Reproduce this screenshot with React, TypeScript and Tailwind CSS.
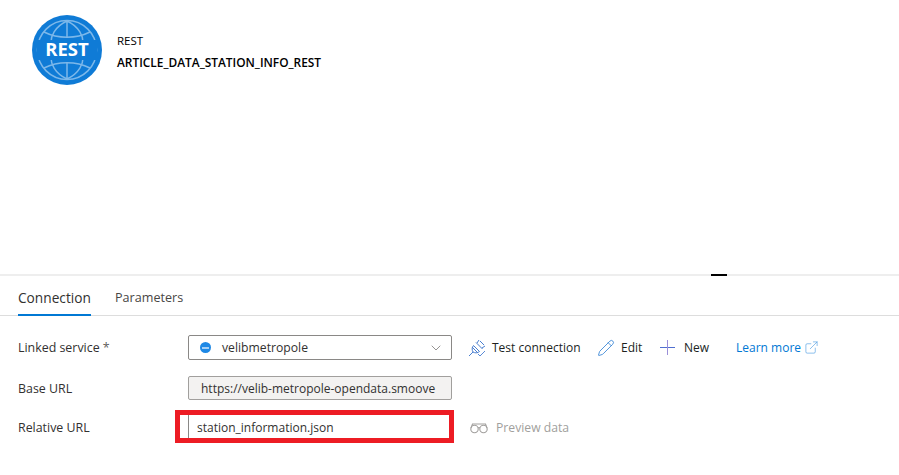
import { ChevronDown, Pencil, ExternalLink } from 'lucide-react'

function RestLogo() {
  return (
    <svg width="70" height="70" viewBox="0 0 70 70">
      <circle cx="35" cy="35" r="35" fill="#0f7bd6" />
      <circle cx="35" cy="35" r="29.5" fill="none" stroke="#7db8ea" strokeWidth="1.5" />
      <path d="M35 6 C22 12 19 22 19 27 M35 6 C48 12 51 22 51 27 M35 64 C22 58 19 48 19 43 M35 64 C48 58 51 48 51 43 M35 6 V22 M35 48 V64" fill="none" stroke="#7db8ea" strokeWidth="1.5" />
      <path d="M12 17 C26 24 44 24 58 17 M12 53 C26 46 44 46 58 53" fill="none" stroke="#7db8ea" strokeWidth="1.5" />
      <rect x="5" y="25" width="60" height="20" fill="#0f7bd6" />
      <text x="35" y="41" textAnchor="middle" fill="#fff" fontSize="18.5" fontWeight="700" fontFamily="'Open Sans', sans-serif">REST</text>
    </svg>
  )
}

function PlugIcon() {
  return (
    <svg width="18" height="18" viewBox="0 0 18 18" fill="none" stroke="#4a7fd0" strokeWidth="1" className="shrink-0">
      <path d="M1 17 L5 13 M4 8 L10 14 M5.5 6.5 C3.5 9 4 11 5 13 C7 14 9 14.5 11.5 12.5 Z" />
      <path d="M8 3.5 L14.5 10 M11 1 L9 4 M17 7 L14 9 M12 2 L16 6" />
      <path d="M10 15 L12 17 L17 12" stroke="#5b8bd6" />
    </svg>
  )
}

function PlusIcon() {
  return (
    <svg width="15" height="15" viewBox="0 0 15 15" className="shrink-0">
      <rect x="0" y="7" width="15" height="1" fill="#4f6fd0" />
      <rect x="7" y="0" width="1" height="15" fill="#9a8fd8" />
    </svg>
  )
}

function GlassesIcon() {
  return (
    <svg width="18" height="12" viewBox="0 0 18 12" fill="none" stroke="#a19f9d" strokeWidth="1.1" className="shrink-0">
      <circle cx="4.5" cy="7" r="3.7" />
      <circle cx="13.5" cy="7" r="3.7" />
      <path d="M1 6 L2.5 2 H15.5 L17 6 M8 6 Q9 5 10 6" />
    </svg>
  )
}

function Label({ children }: { children: React.ReactNode }) {
  return <div className="w-[170px] shrink-0 pt-[2px] text-[12.4px] text-[#323130]">{children}</div>
}

export default function App() {
  return (
    <div className="relative h-[475px] w-[899px] overflow-hidden bg-white font-['Open_Sans',sans-serif] text-[12px] text-[#323130]">
      <div className="flex h-[274px] items-start pl-[32px] pt-[15px]">
        <RestLogo />
        <div className="ml-[15px] mt-[17px] flex flex-col text-black">
          <span className="text-[11.5px] leading-[18px]">REST</span>
          <span className="mt-[3px] text-[11.9px] font-semibold leading-[18px]">ARTICLE_DATA_STATION_INFO_REST</span>
        </div>
      </div>

      <div className="relative h-[2px] bg-[#eeeeee]">
        <div className="absolute left-[711px] top-0 h-[2px] w-[16px] bg-black" />
      </div>

      <div className="flex h-[40px] items-stretch border-b border-[#dddddd] pl-[18px]">
        <div className="relative flex w-[73px] items-center whitespace-nowrap pt-[5px] text-[13.7px] text-[#323130]">
          Connection
          <div className="absolute bottom-[-1px] left-0 right-0 h-[2px] bg-[#0078d4]" />
        </div>
        <div className="ml-[24px] flex items-center pt-[5px] text-[12.6px] text-[#484644]">Parameters</div>
      </div>

      <div className="flex flex-col pl-[18px] pt-[19px]">
        <div className="flex h-[25px] items-center">
          <Label>Linked service <span className="text-[#605e5c]">*</span></Label>
          <div className="flex h-[25px] w-[264px] items-center rounded-[2px] border border-[#8a8886] pl-[11px] pr-[7px]">
            <span className="flex h-[11px] w-[11px] items-center justify-center rounded-full bg-[#1e88e5]">
              <span className="h-[2px] w-[7px] bg-white/60" />
            </span>
            <span className="ml-[11px] flex-1 pt-[1px] text-[12.2px]">velibmetropole</span>
            <ChevronDown size={16} strokeWidth={1} className="text-[#605e5c]" />
          </div>
          <div className="ml-[16px] flex items-center text-[12px] text-[#201f1e]">
            <PlugIcon />
            <span className="ml-[6px] w-[89px] whitespace-nowrap">Test connection</span>
            <Pencil size={18} strokeWidth={1.1} className="ml-[16px] text-[#2f7fd3]" />
            <span className="ml-[6px] w-[22px]">Edit</span>
            <div className="ml-[17px]"><PlusIcon /></div>
            <span className="ml-[9px] w-[25px]">New</span>
            <span className="ml-[27px] w-[64px] whitespace-nowrap text-[#0078d4]">Learn more</span>
            <ExternalLink size={15} strokeWidth={1} className="ml-[4px] text-[#4a9ae0]" />
          </div>
        </div>

        <div className="mt-[16px] flex h-[24px] items-center">
          <Label>Base URL</Label>
          <div className="flex h-[24px] w-[264px] items-center overflow-hidden whitespace-nowrap rounded-[2px] border border-[#a19f9d] bg-[#f3f2f1] pl-[12px] pt-[2px] text-[12px]">
            https://velib-metropole-opendata.smoove
          </div>
        </div>

        <div className="mt-[15px] flex h-[23px] items-center">
          <div className="w-[170px] shrink-0 pt-[4px] text-[12.4px] text-[#323130]">Relative URL</div>
          <div className="relative flex h-[23px] w-[264px] items-center border-l border-[#8a8886] pl-[8px] pt-[3px] text-[12px]">
            station_information.json
            <div className="absolute left-[-14px] top-[-5px] h-[33px] w-[279px] border-[5px] border-[#ed1c24]" />
          </div>
          <div className="ml-[18px] flex items-center pt-[4px] text-[12.2px] text-[#a19f9d]">
            <GlassesIcon />
            <span className="ml-[8px]">Preview data</span>
          </div>
        </div>
      </div>
    </div>
  )
}
